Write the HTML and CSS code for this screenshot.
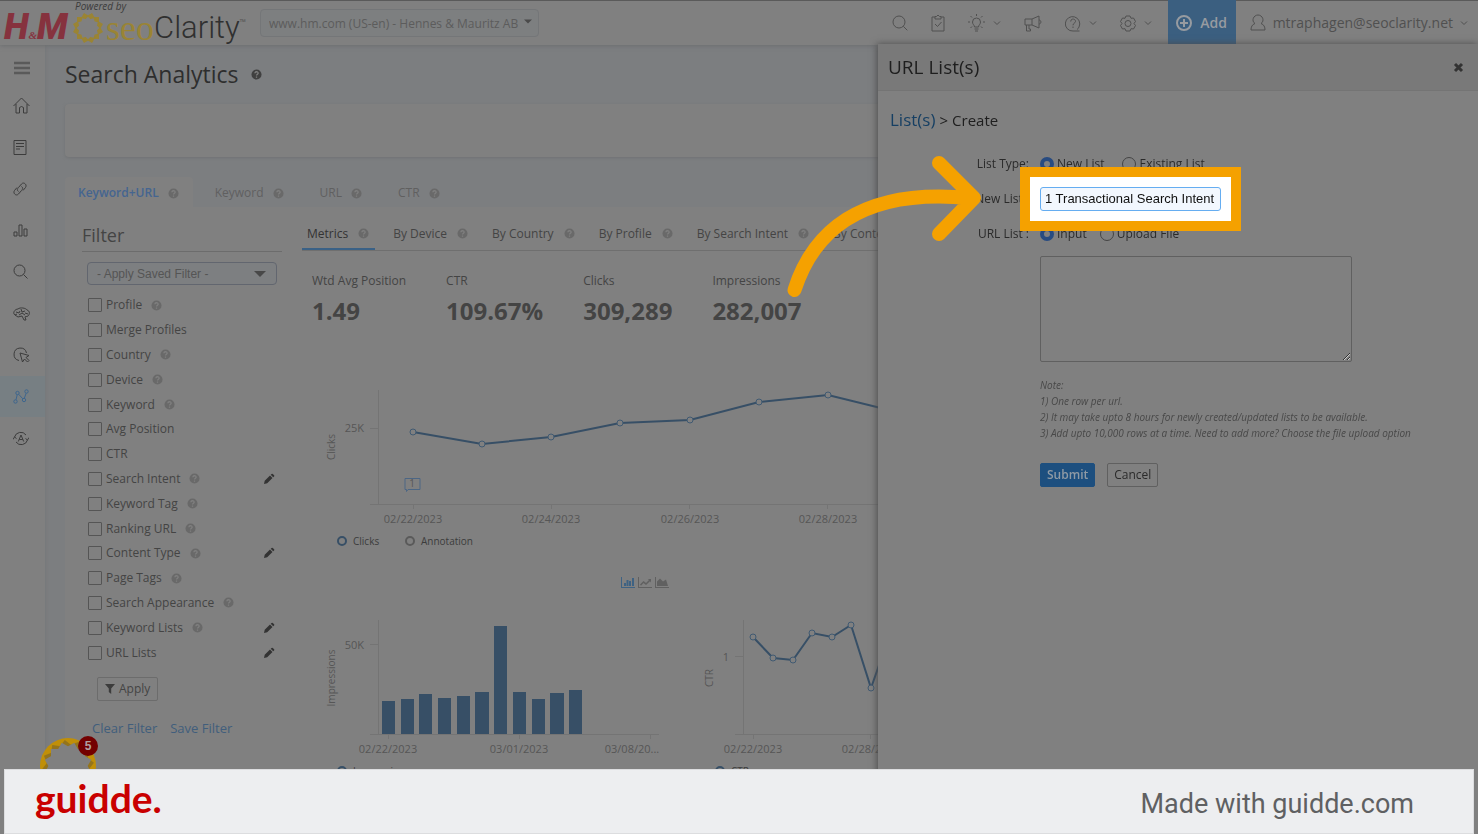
FILE: index.html
```html
<!DOCTYPE html>
<html lang="en">
<head>
<meta charset="utf-8">
<title>Search Analytics</title>
<link rel="stylesheet" href="styles.css">
</head>
<body>
<svg class="sprite" aria-hidden="true">
  <symbol id="help" viewBox="0 0 12 12"><circle cx="6" cy="6" r="5.5" fill="currentColor"/><path d="M4.2 4.7C4.3 2.4 7.9 2.5 7.8 4.6 7.7 5.8 6 5.7 6 7.2M6 8.2V9.5" fill="none" stroke="#808080" stroke-width="1.4"/></symbol>
  <symbol id="pencil" viewBox="0 0 12 12"><path d="M1 11l.7-3.2L7 2.500l2.500 2.500L4.200 10.300zM7.700 1.800l.9-.9q.6-.5 1.200 0l1.300 1.300q.5.6 0 1.200l-.9.9z" fill="currentColor"/></symbol>
  <symbol id="chev" viewBox="0 0 8 8"><path d="M1 2.500l3 3 3-3" fill="none" stroke="currentColor"/></symbol>
  <symbol id="caret" viewBox="0 0 12 6"><path d="M0 0h12L6 6z" fill="currentColor"/></symbol>
</svg>

<div class="app">
  <header class="topbar">
    <div class="hm" role="img" aria-label="H&amp;M"><span>H</span><small>&amp;</small><span>M</span></div>
    <div class="brand">
      <span class="powered">Powered by</span>
      <div class="wordmark">
        <svg width="32" height="32" viewBox="-16 -16 32 32" aria-hidden="true"><g fill="#9a8434"><path d="M-11-11h22v22h-22z"/><path d="M-11-11h22v22h-22z" transform="rotate(30)"/><path d="M-11-11h22v22h-22z" transform="rotate(60)"/></g><g fill="#808080"><path d="M-8-8H8V8H-8z" transform="rotate(15)"/><path d="M-8-8H8V8H-8z" transform="rotate(45)"/><path d="M-8-8H8V8H-8z" transform="rotate(75)"/></g></svg>
        <span class="seo">seo</span><span class="clarity">Clarity</span><span class="tm">™</span>
      </div>
    </div>
    <label class="site"><select aria-label="Site"><option>www.hm.com (US-en) - Hennes &amp; Mauritz AB</option></select><svg width="8" height="5"><use href="#caret"/></svg></label>
    <nav class="tools" aria-label="Tools">
      <button aria-label="Search"><svg width="16" height="16" viewBox="0 0 16 16" class="line"><circle cx="7" cy="7" r="6"/><path d="M11.300 11.300l4 4"/></svg></button>
      <button aria-label="Tasks"><svg width="14" height="18" viewBox="0 0 14 18" class="line"><path d="M4 3H1v14h12V3h-3M4 2.500h1.500q1.500-3 3 0H10V5H4zM4 10l2.500 2.500L10.500 8"/></svg></button>
      <button aria-label="Ideas"><svg width="17" height="18" viewBox="0 0 17 18" class="line"><path d="M6.500 13c0-2-2-2.500-2-5a4 4 0 018 0c0 2.500-2 3-2 5zM6.500 15h4M7 17h3M8.500 0v2M0 8h2M15 8h2M2.500 2l1.500 1.500M14.500 2L13 3.500M2.500 14L4 12.500M14.500 14L13 12.500"/></svg><svg width="8" height="8"><use href="#chev"/></svg></button>
      <button aria-label="News"><svg width="18" height="17" viewBox="0 0 18 17" class="line"><path d="M1 4h7l7-3v12l-7-3H1zM8 4v6M2.500 10v6h4v-2H5v-4M15 5c2.500 0 2.500 4 0 4"/></svg></button>
      <button aria-label="Help"><svg width="16" height="17" viewBox="0 0 16 17" class="line"><path d="M14.500 16H8A7.200 7.200 0 1114 12q-.5 1.500-2 2.500M5.700 6.500c0-3.500 5-3 4.800 0C10.300 8.300 8 8 8 10.300M8 11.500V13"/></svg><svg width="8" height="8"><use href="#chev"/></svg></button>
      <button aria-label="Settings"><svg width="16" height="17" viewBox="0 0 16 17" class="line"><path d="M6 1h4l1 2.300 2.500-.3 2 3.500L14 8.500l1.500 2-2 3.500-2.500-.3L10 16H6l-1-2.300-2.500.3-2-3.500 1.500-2-1.500-2 2-3.500 2.500.3z"/><circle cx="8" cy="8.500" r="3"/></svg><svg width="8" height="8"><use href="#chev"/></svg></button>
    </nav>
    <button class="add"><svg width="16" height="16" viewBox="0 0 16 16" class="line bold"><circle cx="8" cy="8" r="7"/><path d="M8 4v8M4 8h8"/></svg>Add</button>
    <button class="account"><svg width="16" height="18" viewBox="0 0 16 18" class="line"><path d="M5 9.500C1 7 3.500 1 8 1s7 6 3 8.500c3 1 4 3.500 4 6.500H1c0-3 1-5.500 4-6.500"/></svg>mtraphagen@seoclarity.net<svg width="8" height="8"><use href="#chev"/></svg></button>
  </header>

  <div class="body">
    <nav class="rail" aria-label="Main">
      <button class="burger" aria-label="Menu"><svg width="16" height="14" viewBox="0 0 16 14"><path d="M0 2h16M0 7h16M0 12h16" stroke="#5a5a5a" stroke-width="2.400"/></svg></button>
      <div class="rail-items">
        <a href="#" aria-label="Home"><svg width="17" height="17" viewBox="0 0 17 17" class="line"><path d="M.5 9l8-8 8 8M3 7v9h3.500v-5.500q2-2 4 0V16H14V7"/></svg></a>
        <a href="#" aria-label="Reports"><svg width="14" height="15" viewBox="0 0 14 15" class="line"><path d="M1 .5h12v14H1zM3 3.500h8M3 6.500h8M3 9h4"/></svg></a>
        <a href="#" aria-label="Links"><svg width="14" height="14" viewBox="0 0 14 14" class="line"><path d="M5.500 9.500c-2-1.500-1-3 0-4l3-3.500c2-2.500 6 .5 4 3.500l-2.500 3M8.500 4.500c2 1.500 1 3 0 4l-3 3.500c-2 2.500-6-.5-4-3.500L4 5.500"/></svg></a>
        <a href="#" aria-label="Rankings"><svg width="15" height="13" viewBox="0 0 15 13" class="line"><path d="M1 8h3v4H1zM6 1h3v11H6zM11 5h3v7h-3z"/></svg></a>
        <a href="#" aria-label="Research"><svg width="15" height="15" viewBox="0 0 15 15" class="line"><circle cx="6.500" cy="6.500" r="5.500"/><path d="M10.500 10.500l4 4"/></svg></a>
        <a href="#" aria-label="Insights"><svg width="17" height="14" viewBox="0 0 17 14" class="line"><path d="M2 8C-1 6 2 2 5 2c2-2 8-1 9 1 3 1 3 4 1 6-1 1-3 0-3 1l1 3h-2l-2-4-4 1-3-2 2-1M3 5l3 1 1-2M8 2l1 3 3-1M6 8l3-2 3 2M12 6l3 1"/></svg></a>
        <a href="#" aria-label="Clicks"><svg width="17" height="16" viewBox="0 0 17 16" class="line"><path d="M6 13.500A6.300 6.300 0 1113.500 6M7 6l2.500 9 2-3 3 3 1.500-1.500-3-3 3-2z"/></svg></a>
        <a href="#" class="on" aria-label="Search Analytics"><svg width="16" height="15" viewBox="0 0 16 15" class="line"><circle cx="2.500" cy="12.500" r="1.700"/><circle cx="4.500" cy="4" r="1.700"/><circle cx="11" cy="11" r="1.700"/><circle cx="13.500" cy="2.500" r="1.700"/><path d="M3 10.800L4.200 5.700M5.700 5.300L9.800 9.800M11.300 9.300l1.800-5"/></svg></a>
        <a href="#" aria-label="Automation"><svg width="16" height="15" viewBox="0 0 16 15" class="line"><path d="M1.500 6A6.500 6.500 0 0113 4M14.500 9A6.500 6.500 0 013 11M0 8.500L1.500 6l2 1.500M16 6.500L14.500 9l-2-1.500M5.300 10.500L8 4l2.700 6.500M6.300 8.500h3.400"/></svg></a>
      </div>
    </nav>

    <main class="main">
      <h1>Search Analytics <svg width="11" height="11"><use href="#help"/></svg></h1>
      <section class="banner"></section>
      <nav class="tabs" aria-label="Scope">
        <a href="#" class="on">Keyword+URL<svg width="11" height="11"><use href="#help"/></svg></a>
        <a href="#">Keyword<svg width="11" height="11"><use href="#help"/></svg></a>
        <a href="#">URL<svg width="11" height="11"><use href="#help"/></svg></a>
        <a href="#">CTR<svg width="11" height="11"><use href="#help"/></svg></a>
      </nav>
      <div class="sheet">
        <aside class="filter">
          <h2>Filter</h2>
          <label class="saved"><select aria-label="Saved filter"><option>- Apply Saved Filter -</option></select><svg width="12" height="6"><use href="#caret"/></svg></label>
          <ul class="checks">
            <li><label><input type="checkbox">Profile</label><svg width="11" height="11"><use href="#help"/></svg></li>
            <li><label><input type="checkbox">Merge Profiles</label></li>
            <li><label><input type="checkbox">Country</label><svg width="11" height="11"><use href="#help"/></svg></li>
            <li><label><input type="checkbox">Device</label><svg width="11" height="11"><use href="#help"/></svg></li>
            <li><label><input type="checkbox">Keyword</label><svg width="11" height="11"><use href="#help"/></svg></li>
            <li><label><input type="checkbox">Avg Position</label></li>
            <li><label><input type="checkbox">CTR</label></li>
            <li><label><input type="checkbox">Search Intent</label><svg width="11" height="11"><use href="#help"/></svg><button class="edit" aria-label="Edit"><svg width="12" height="12"><use href="#pencil"/></svg></button></li>
            <li><label><input type="checkbox">Keyword Tag</label><svg width="11" height="11"><use href="#help"/></svg></li>
            <li><label><input type="checkbox">Ranking URL</label><svg width="11" height="11"><use href="#help"/></svg></li>
            <li><label><input type="checkbox">Content Type</label><svg width="11" height="11"><use href="#help"/></svg><button class="edit" aria-label="Edit"><svg width="12" height="12"><use href="#pencil"/></svg></button></li>
            <li><label><input type="checkbox">Page Tags</label><svg width="11" height="11"><use href="#help"/></svg></li>
            <li><label><input type="checkbox">Search Appearance</label><svg width="11" height="11"><use href="#help"/></svg></li>
            <li><label><input type="checkbox">Keyword Lists</label><svg width="11" height="11"><use href="#help"/></svg><button class="edit" aria-label="Edit"><svg width="12" height="12"><use href="#pencil"/></svg></button></li>
            <li><label><input type="checkbox">URL Lists</label><button class="edit" aria-label="Edit"><svg width="12" height="12"><use href="#pencil"/></svg></button></li>
          </ul>
          <button class="apply"><svg width="10" height="10" viewBox="0 0 10 10"><path d="M0 0h10L6.200 4.500V10L3.800 8V4.500z" fill="#3c3c3c"/></svg>Apply</button>
          <div class="links"><a href="#">Clear Filter</a><a href="#">Save Filter</a></div>
        </aside>

        <section class="report">
          <nav class="subtabs" aria-label="Breakdown">
            <a href="#" class="on">Metrics<svg width="11" height="11"><use href="#help"/></svg></a>
            <a href="#">By Device<svg width="11" height="11"><use href="#help"/></svg></a>
            <a href="#">By Country<svg width="11" height="11"><use href="#help"/></svg></a>
            <a href="#">By Profile<svg width="11" height="11"><use href="#help"/></svg></a>
            <a href="#">By Search Intent<svg width="11" height="11"><use href="#help"/></svg></a>
            <a href="#">By Content Type<svg width="11" height="11"><use href="#help"/></svg></a>
          </nav>
          <dl class="metrics">
            <div><dt>Wtd Avg Position</dt><dd>1.49</dd></div>
            <div><dt>CTR</dt><dd>109.67%</dd></div>
            <div><dt>Clicks</dt><dd>309,289</dd></div>
            <div><dt>Impressions</dt><dd>282,007</dd></div>
          </dl>
          <svg class="chart" width="760" height="180" viewBox="302 380 760 180">
            <path class="axis" d="M378.500 390v114M370 428.500h8M370 504.500h692M413.500 505v4M551.500 505v4M689.500 505v4M827.500 505v4"/>
            <text class="tick end" x="364" y="432">25K</text>
            <text class="title" transform="rotate(-90 335 447)" x="335" y="447">Clicks</text>
            <path class="series" d="M413 432l69 12 69-7 69-14 70-3 69-18 69-7 69 17"/>
            <g class="dots"><circle cx="413" cy="432" r="3"/><circle cx="482" cy="444" r="3"/><circle cx="551" cy="437" r="3"/><circle cx="620" cy="423" r="3"/><circle cx="690" cy="420" r="3"/><circle cx="759" cy="402" r="3"/><circle cx="828" cy="395" r="3"/></g>
            <path d="M405 478.500h15v11h-12l-1.500 2v-2H405z" fill="none" stroke="#4c6684"/>
            <text class="title" x="412" y="487">1</text>
            <g class="tick"><text x="413" y="523">02/22/2023</text><text x="551" y="523">02/24/2023</text><text x="690" y="523">02/26/2023</text><text x="828" y="523">02/28/2023</text></g>
            <circle class="key" cx="342" cy="541" r="4"/><text class="legend" x="353" y="545">Clicks</text>
            <circle class="key off" cx="410" cy="541" r="4"/><text class="legend" x="421" y="545">Annotation</text>
          </svg>
          <div class="kinds">
            <button class="on" aria-label="Bars"><svg width="14" height="11" viewBox="0 0 14 11"><path d="M0 0h1v10h13v1H0zM3 6h2v3H3zM5.500 3h2v6h-2zM8 4h2v5H8zM11 1h2v8h-2z"/></svg></button>
            <button aria-label="Line"><svg width="14" height="11" viewBox="0 0 14 11"><path d="M0 0h1v10h13v1H0zM2 7.500L5.500 4 8 6l3-3-1.200-1H13v3.500L12 4.300 8 8 5.500 6 3 8.700z"/></svg></button>
            <button aria-label="Area"><svg width="14" height="11" viewBox="0 0 14 11"><path d="M0 0h1v10h13v1H0zM2 9V4.500L5 1.500 8 4.500l3-2 2 6.500z"/></svg></button>
          </div>
          <div class="pair">
            <svg class="chart" width="380" height="180" viewBox="302 610 380 180">
              <path class="axis" d="M378.500 620v114M370 644.500h8M370 734.500h289M388.500 735v4M519.500 735v4M650.500 735v4"/>
              <text class="tick end" x="364" y="649">50K</text>
              <text class="title" transform="rotate(-90 335 678)" x="335" y="678">Impressions</text>
              <path fill="#374f66" d="M382 701h13v33h-13zM401 699h13v35h-13zM419 694h13v40h-13zM438 698h13v36h-13zM457 696h13v38h-13zM475 692h14v42h-14zM494 626h13v108h-13zM513 692h13v42h-13zM532 699h13v35h-13zM550 693h14v41h-14zM569 690h13v44h-13z"/>
              <g class="tick"><text x="388" y="753">02/22/2023</text><text x="519" y="753">03/01/2023</text><text x="632" y="753">03/08/20...</text></g>
              <circle class="key" cx="342" cy="771" r="4"/><text class="legend" x="353" y="775">Impressions</text>
            </svg>
            <svg class="chart" width="380" height="180" viewBox="682 610 380 180">
              <path class="axis" d="M743.500 620v114M735 656.500h8M735 734.500h320M753.500 735v4M870.500 735v4"/>
              <text class="tick end" x="729" y="661">1</text>
              <text class="title" transform="rotate(-90 713 678)" x="713" y="678">CTR</text>
              <path class="series" d="M753 637l20 21 20 2 19-27 20 4 19-12 20 63 20-57"/>
              <g class="dots"><circle cx="753" cy="637" r="3"/><circle cx="773" cy="658" r="3"/><circle cx="793" cy="660" r="3"/><circle cx="812" cy="633" r="3"/><circle cx="832" cy="637" r="3"/><circle cx="851" cy="625" r="3"/><circle cx="871" cy="688" r="3"/></g>
              <g class="tick"><text x="753" y="753">02/22/2023</text><text x="871" y="753">02/28/2023</text></g>
              <circle class="key" cx="720" cy="771" r="4"/><text class="legend" x="731" y="775">CTR</text>
            </svg>
          </div>
        </section>
      </div>
    </main>
  </div>
</div>

<section class="drawer" aria-label="URL List(s)">
  <header><h2>URL List(s)</h2><button aria-label="Close"><svg width="11" height="11" viewBox="0 0 11 11"><path d="M2 2l7 7M9 2l-7 7" stroke="#333" stroke-width="3"/></svg></button></header>
  <form class="form">
    <p class="crumbs"><a href="#">List(s)</a><span class="sep">&gt;</span><span>Create</span></p>
    <div class="row"><span class="name">List Type:</span><div class="radios wide"><label><input type="radio" name="type" checked>New List</label><label><input type="radio" name="type">Existing List</label></div></div>
    <div class="row"><label class="name" for="new-list">New List :</label><div class="spot"><input id="new-list" type="text" value="1 Transactional Search Intent"></div></div>
    <div class="row"><span class="name">URL List :</span><div class="radios"><label><input type="radio" name="src" checked>Input</label><label><input type="radio" name="src">Upload File</label></div></div>
    <div class="under">
      <textarea aria-label="URLs"></textarea>
      <p class="note">Note:<br>1) One row per url.<br>2) It may take upto 8 hours for newly created/updated lists to be available.<br>3) Add upto 10,000 rows at a time. Need to add more? Choose the file upload option</p>
      <div class="actions"><button type="button" class="submit">Submit</button><button type="button" class="cancel">Cancel</button></div>
    </div>
  </form>
  <svg class="arrow" width="200" height="150" viewBox="785 152 200 150" aria-hidden="true"><path d="M794.500 290C812 235 858 187 970 198M939 163l35 35-35 36" fill="none" stroke="#f5a100" stroke-width="14" stroke-linecap="round" stroke-linejoin="round"/></svg>
</section>

<button class="bubble" aria-label="Messages">
  <svg width="58" height="58" viewBox="-29 -29 58 58"><circle r="28" fill="#c08f08"/><g fill="#94741c"><path d="M-18.500-18.500h37v37h-37z" transform="rotate(8)"/><path d="M-18.500-18.500h37v37h-37z" transform="rotate(38)"/><path d="M-18.500-18.500h37v37h-37z" transform="rotate(68)"/></g><g fill="#808080"><path d="M-17-17h34v34h-34z"/><path d="M-17-17h34v34h-34z" transform="rotate(30)"/><path d="M-17-17h34v34h-34z" transform="rotate(60)"/></g></svg>
  <span class="count">5</span>
</button>

<footer class="credit"><span class="logo">guidde.</span><span>Made with guidde.com</span></footer>
</body>
</html>
```

FILE: styles.css
```css
* { box-sizing: border-box; }
body { margin: 0; background: #7c7e80; color: #444; font: 12px/16px "Open Sans", "Noto Sans", sans-serif; }
h1, h2, p, ul, dl, dd { margin: 0; padding: 0; font-weight: 400; }
ul { list-style: none; }
a { color: inherit; text-decoration: none; }
button { margin: 0; padding: 0; border: 0; background: none; color: inherit; font: inherit; }
input, select, textarea { margin: 0; }
svg { display: block; flex: none; }
.sprite { position: absolute; width: 0; height: 0; }
.line { fill: none; stroke: currentColor; stroke-width: 1; }
.line.bold { stroke-width: 2; }

.app { height: 100vh; overflow: hidden; display: flex; flex-direction: column; }

/* Top bar */
.topbar { display: flex; align-items: center; height: 45px; flex: none; background: #808080; border-top: 1px solid #5a5a5a; box-shadow: 0 1px 4px #6c6e70; color: #505050; z-index: 1; padding-left: 4px; }
.hm { display: flex; align-items: baseline; width: 66px; padding-top: 8px; color: #86323e; font: italic 900 36px/36px Roboto, sans-serif; }
.hm small { font: italic 700 11px/12px "Liberation Serif", serif; }
.brand { height: 44px; width: 180px; margin-left: 2px; }
.powered { display: block; padding-left: 3px; font-style: italic; font-size: 10px; line-height: 11px; color: #3c3c3c; }
.wordmark { display: flex; align-items: center; height: 31px; }
.seo { margin-left: 2px; font: 36px/30px "Liberation Serif", serif; color: #9a8434; }
.clarity { font: 300 31px/30px Roboto, sans-serif; color: #303030; }
.tm { font-size: 8px; line-height: 8px; align-self: flex-start; padding-top: 6px; }
.site { position: relative; margin-left: 8px; }
.site select { appearance: none; width: 279px; height: 28px; padding: 0 8px; border: 1px solid #747678; border-radius: 4px; background: #7d7f80; color: #5c5c5c; font: 12px "Open Sans", sans-serif; opacity: 1; }
.site svg { position: absolute; right: 7px; top: 10px; color: #4a4a4a; }
.tools { display: flex; align-items: center; margin-left: auto; gap: 23px; margin-right: 16px; }
.tools button { display: flex; align-items: center; gap: 8px; }
.add { align-self: stretch; display: flex; align-items: center; justify-content: center; gap: 8px; width: 68px; margin-top: -1px; background: #3b5f80; color: #979ba0; font-size: 14px; font-weight: 600; }
.account { display: flex; align-items: center; gap: 7px; padding: 0 10px 0 14px; font-size: 14px; }

/* Side rail */
.body { flex: 1; display: flex; min-height: 0; }
.rail { width: 45px; flex: none; background: #808080; color: #3c3c3c; box-shadow: 1px 0 3px #76787a; }
.burger { display: flex; align-items: center; justify-content: center; width: 43px; height: 40px; padding-top: 5px; }
.rail-items { display: grid; grid-auto-rows: 1fr; height: 374px; }
.rail-items a { display: flex; align-items: center; padding-left: 13px; }
.rail-items .on { background: #777f83; color: #3e668e; }

/* Main column */
.main { flex: 1; min-width: 0; padding: 15px 20px 0; display: flex; flex-direction: column; }
h1 { display: flex; align-items: center; gap: 12px; font-size: 23px; line-height: 28px; color: #2e2e2e; }
h1 svg { color: #404040; }
.banner { height: 53px; margin-top: 16px; flex: none; border-radius: 4px; background: #808080; box-shadow: 0 1px 3px #707274; }
.tabs { display: flex; gap: 9px; margin-top: 20px; color: #606060; }
.tabs a { display: flex; align-items: center; gap: 9px; height: 30px; padding: 2px 14px 0 13px; }
.tabs svg, .subtabs svg, .checks svg { color: #696969; }
.tabs .on { background: #808080; border-radius: 4px 4px 0 0; color: #456590; font-weight: 600; }
.sheet { flex: 1; min-height: 0; display: flex; background: #808080; }

/* Filter column */
.filter { width: 217px; flex: none; margin-left: 17px; padding-top: 17px; }
.filter h2 { width: 200px; padding-bottom: 5px; border-bottom: 1px solid #6c6c6c; font-size: 18px; line-height: 22px; }
.saved { position: relative; display: block; width: 190px; margin: 10px 0 8px 5px; }
.saved select { appearance: none; width: 190px; height: 23px; padding: 0 9px; border: 1px solid #62666f; border-radius: 4px; background: #7d7f81; color: #555; font: 12px "Liberation Sans", sans-serif; }
.saved svg { position: absolute; right: 11px; top: 9px; color: #484848; }
.checks { display: grid; grid-auto-rows: 1fr; height: 372px; width: 187px; margin-left: 6px; }
.checks li { display: flex; align-items: center; gap: 9px; }
.checks label { display: flex; align-items: center; gap: 4px; }
.checks input { appearance: none; width: 14px; height: 14px; border: 1px solid #555; border-radius: 1px; }
.checks .edit { margin-left: auto; }
.checks .edit svg { color: #333; }
.apply { display: flex; align-items: center; gap: 4px; height: 24px; margin: 12px 0 0 15px; padding: 0 7px; border: 1px solid #6c6c6c; border-radius: 2px; }
.links { display: flex; gap: 13px; margin: 19px 0 0 10px; font-size: 13px; color: #415e7c; }

/* Report */
.report { flex: 1; min-width: 0; margin-left: 3px; overflow: hidden; }
.subtabs { display: flex; gap: 13px; height: 44px; border-bottom: 1px solid #6f6f6f; white-space: nowrap; }
.subtabs a { display: flex; align-items: center; gap: 10px; padding: 10px 6px 0 5px; }
.subtabs .on { padding-top: 12px; border-bottom: 2px solid #3a6186; color: #333; }
.metrics { display: flex; gap: 40px; padding: 22px 0 0 10px; }
.metrics dd { padding-top: 6px; font-size: 24px; line-height: 32px; font-weight: 700; }
.chart { overflow: hidden; }
.report > .chart { margin-top: 53px; }
.chart text { font-size: 10px; fill: #565656; }
.axis { fill: none; stroke: #747474; }
.series { fill: none; stroke: #374f66; stroke-width: 2; }
.dots { fill: #808080; stroke: #405a72; }
.key { fill: none; stroke: #374f66; stroke-width: 2; }
.key.off { stroke: #5a5a5a; }
.chart .tick, .chart .tick text { font-size: 11px; text-anchor: middle; }
.chart .tick.end { text-anchor: end; }
.chart .title { text-anchor: middle; }
.chart .legend { fill: #3c3c3c; }
.kinds { display: flex; gap: 3px; margin: 17px 0 22px 319px; fill: #606060; }
.kinds .on { fill: #3e6283; }
.pair { display: flex; }

/* Drawer */
.drawer { position: fixed; z-index: 2; top: 44px; right: 0; bottom: 0; width: 600px; background: #808080; box-shadow: -1px 0 7px #4c4c4c; color: #2a2a2a; }
.drawer > header { display: flex; align-items: center; justify-content: space-between; height: 47px; padding: 0 14px 0 10px; background: #797979; border-bottom: 1px solid #747474; }
.drawer h2 { font-size: 19px; line-height: 24px; color: #1e1e1e; }
.form { padding-top: 18px; }
.crumbs { display: flex; align-items: baseline; gap: 4px; padding-left: 12px; font-size: 15px; line-height: 22px; color: #1e1e1e; }
.crumbs a { font-size: 17px; color: #163f63; }
.row { display: flex; align-items: center; height: 35px; }
.crumbs + .row { margin-top: 15px; }
.name { width: 151px; margin-right: 11px; text-align: right; font-weight: 500; }
.radios { display: flex; gap: 13px; }
.radios.wide { gap: 18px; }
.radios label { display: flex; align-items: center; gap: 3px; }
.radios input { appearance: none; width: 14px; height: 14px; border: 1px solid #444; border-radius: 50%; }
.radios input:checked { border: 4px solid #284b80; }
.spot { position: relative; z-index: 1; }
.spot::before { content: ""; position: absolute; inset: -20px; border: 10px solid #f5a100; background: #fff; }
.spot input { position: relative; display: block; width: 181px; height: 24px; padding: 0 4px; border: 1px solid #65adf1; border-radius: 3px; background: #f2f7fe; color: #111; font: 13px "Liberation Sans", sans-serif; }
.under { padding: 5px 0 0 162px; }
textarea { display: block; width: 312px; height: 106px; border: 1px solid #606060; border-radius: 2px; background: #808080; }
.note { padding-top: 15px; font-size: 10px; font-style: italic; color: #484848; white-space: nowrap; }
.actions { display: flex; gap: 12px; margin-top: 22px; }
.actions button { height: 24px; padding: 0 6px; border: 1px solid #606060; border-radius: 2px; }
.actions .submit { background: #1d4f7f; border-color: #1d4f7f; color: #8f9aa5; font-weight: 600; }
.arrow { position: absolute; z-index: 2; left: -93px; top: 108px; pointer-events: none; }

/* Messages bubble and credit bar */
.bubble { position: fixed; left: 39px; bottom: 39px; z-index: 3; }
.count { position: absolute; right: -1px; top: -1px; width: 20px; height: 20px; border-radius: 50%; background: #730000; color: #b0a0a0; font: 700 12px/20px "Liberation Sans", sans-serif; }
.credit { position: fixed; z-index: 4; left: 4px; right: 4px; bottom: 0; height: 65px; padding: 4px 59px 0 30px; display: flex; align-items: center; justify-content: space-between; background: #edeef0; border: 1px solid #dcdddf; color: #5f6062; font: 27px/32px Roboto, sans-serif; }
.logo { padding-bottom: 12px; font: 700 39px/48px Lato, sans-serif; color: #c90000; }
```
